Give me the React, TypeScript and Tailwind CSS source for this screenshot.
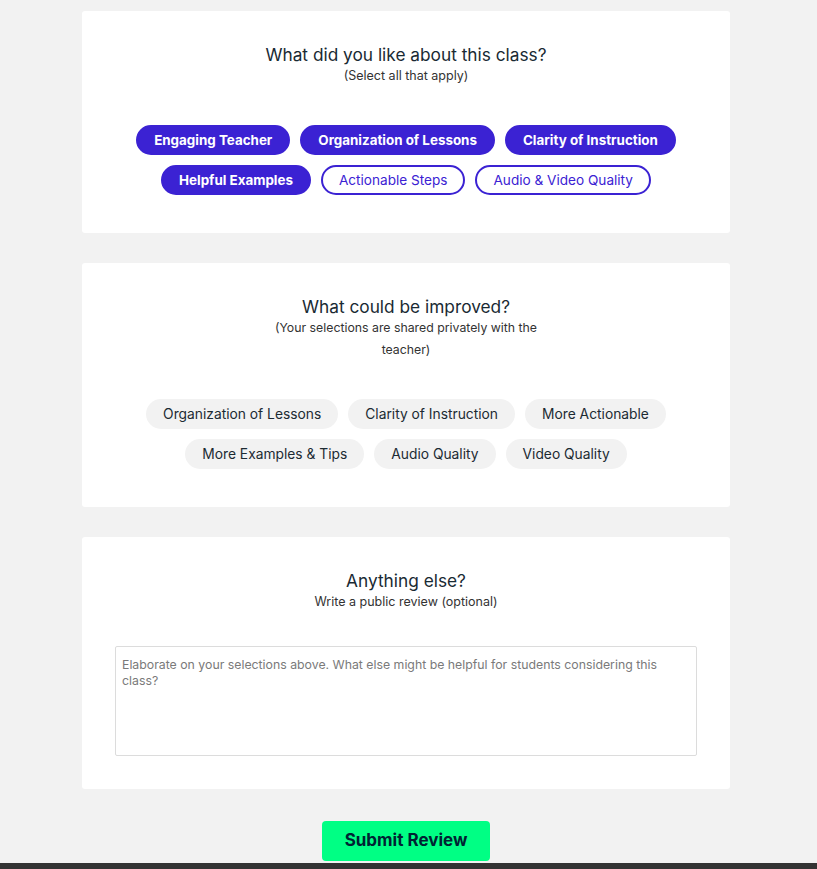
import React from "react";

const liked = [
  { label: "Engaging Teacher", on: true },
  { label: "Organization of Lessons", on: true },
  { label: "Clarity of Instruction", on: true },
  { label: "Helpful Examples", on: true },
  { label: "Actionable Steps", on: false },
  { label: "Audio & Video Quality", on: false },
];

const improve = [
  "Organization of Lessons",
  "Clarity of Instruction",
  "More Actionable",
  "More Examples & Tips",
  "Audio Quality",
  "Video Quality",
];

export default function App() {
  return (
    <div
      className="min-h-[869px] bg-[#f2f2f2] flex flex-col"
      style={{ fontFamily: "Inter, 'Noto Sans', sans-serif" }}
    >
      <div className="flex flex-col items-center pt-[11px] pr-[5px]">
        <div className="w-[648px] bg-white rounded-[3px] flex flex-col items-center pt-[34px] pb-[38px] px-[33px]">
          <h2 className="text-[17.3px] leading-[20px] text-[#192a33]">What did you like about this class?</h2>
          <p className="text-[12.5px] leading-[22px] text-[#333]">(Select all that apply)</p>
          <div className="mt-[38px] flex flex-wrap justify-center gap-[10px] max-w-[560px]">
            {liked.map((p) =>
              p.on ? (
                <span
                  key={p.label}
                  className="h-[30px] px-[16px] rounded-full bg-[#3b22d3] border-2 border-[#3b22d3] text-white font-bold text-[13.4px] flex items-center"
                >
                  {p.label}
                </span>
              ) : (
                <span
                  key={p.label}
                  className="h-[30px] px-[16px] rounded-full bg-white border-2 border-[#3b22d3] text-[#3b22d3] text-[13.6px] flex items-center"
                >
                  {p.label}
                </span>
              )
            )}
          </div>
        </div>

        <div className="mt-[30px] w-[648px] bg-white rounded-[3px] flex flex-col items-center pt-[34px] pb-[38px] px-[33px]">
          <h2 className="text-[17.3px] leading-[20px] text-[#192a33]">What could be improved?</h2>
          <p className="text-[12.3px] leading-[22px] text-[#333] text-center max-w-[280px]">
            (Your selections are shared privately with the teacher)
          </p>
          <div className="mt-[38px] flex flex-wrap justify-center gap-[10px] max-w-[540px]">
            {improve.map((l) => (
              <span
                key={l}
                className="h-[30px] px-[17px] rounded-full bg-[#f2f2f2] text-[#1c2b33] text-[13.8px] flex items-center"
              >
                {l}
              </span>
            ))}
          </div>
        </div>

        <div className="mt-[30px] w-[648px] bg-white rounded-[3px] flex flex-col items-center pt-[34px] pb-[33px] px-[33px]">
          <h2 className="text-[17.3px] leading-[20px] text-[#192a33]">Anything else?</h2>
          <p className="text-[12.5px] leading-[22px] text-[#333]">Write a public review (optional)</p>
          <textarea
            className="mt-[33px] w-[582px] h-[110px] border border-[#dcdcdc] rounded-[2px] px-[6px] py-[10px] text-[12.3px] leading-[16px] resize-none outline-none placeholder:text-[#7a7a7a]"
            placeholder="Elaborate on your selections above. What else might be helpful for students considering this class?"
          />
        </div>

        <button className="mt-[32px] w-[168px] h-[40px] rounded-[4px] bg-[#00ff84] text-[#002333] font-bold text-[17px]">
          Submit Review
        </button>
      </div>
      <div className="mt-[2px] w-full h-[6px] bg-[#333]" />
    </div>
  );
}
